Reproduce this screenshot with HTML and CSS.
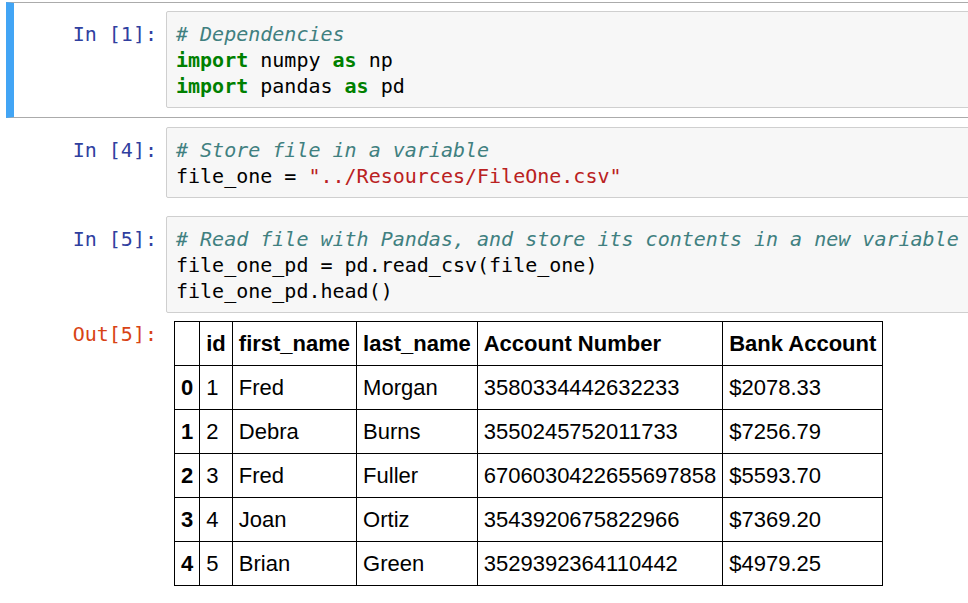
FILE: index.html
```html
<!DOCTYPE html>
<html>
<head>
<meta charset="utf-8">
<link rel="stylesheet" href="styles.css">
</head>
<body>
<div class="notebook">
  <div class="cell selected">
    <div class="row">
      <div class="prompt in">In&nbsp;[1]:</div>
      <div class="input-area"><pre><span class="c"># Dependencies</span>
<span class="k">import</span> numpy <span class="k">as</span> np
<span class="k">import</span> pandas <span class="k">as</span> pd</pre></div>
    </div>
  </div>
  <div class="cell">
    <div class="row">
      <div class="prompt in">In&nbsp;[4]:</div>
      <div class="input-area"><pre><span class="c"># Store file in a variable</span>
file_one = <span class="s">"../Resources/FileOne.csv"</span></pre></div>
    </div>
  </div>
  <div class="cell">
    <div class="row">
      <div class="prompt in">In&nbsp;[5]:</div>
      <div class="input-area"><pre><span class="c"># Read file with Pandas, and store its contents in a new variable</span>
file_one_pd = pd.read_csv(file_one)
file_one_pd.head()</pre></div>
    </div>
    <div class="row output">
      <div class="prompt out">Out[5]:</div>
      <div class="output-sub">
        <table class="df">
          <thead>
            <tr><th></th><th>id</th><th>first_name</th><th>last_name</th><th>Account Number</th><th>Bank Account</th></tr>
          </thead>
          <tbody>
            <tr><th>0</th><td>1</td><td>Fred</td><td>Morgan</td><td>3580334442632233</td><td>$2078.33</td></tr>
            <tr><th>1</th><td>2</td><td>Debra</td><td>Burns</td><td>3550245752011733</td><td>$7256.79</td></tr>
            <tr><th>2</th><td>3</td><td>Fred</td><td>Fuller</td><td>6706030422655697858</td><td>$5593.70</td></tr>
            <tr><th>3</th><td>4</td><td>Joan</td><td>Ortiz</td><td>3543920675822966</td><td>$7369.20</td></tr>
            <tr><th>4</th><td>5</td><td>Brian</td><td>Green</td><td>3529392364110442</td><td>$4979.25</td></tr>
          </tbody>
        </table>
      </div>
    </div>
  </div>
</div>
</body>
</html>
```

FILE: styles.css
```css
html, body {
  margin: 0;
  padding: 0;
  background: #fff;
  overflow: hidden;
}

body {
  padding-top: 2px;
  padding-left: 6px;
}

.notebook {
  width: 1020px;
}

.cell {
  border: 1px solid transparent;
  border-left: 8px solid transparent;
  padding: 8px;
}

.cell.selected {
  border-color: #ababab;
  border-left-color: #42a5f5;
  padding-bottom: 9px;
}

.row {
  display: flex;
  align-items: flex-start;
}

.prompt {
  width: 135px;
  flex: none;
  padding-right: 9px;
  text-align: right;
  font-family: "DejaVu Sans Mono", monospace;
  font-size: 20px;
  line-height: 26px;
  white-space: nowrap;
}

.prompt.in {
  color: #303f9f;
  padding-top: 10px;
}

.prompt.out {
  color: #d84315;
  padding-top: 0;
}

.input-area {
  flex: 1;
  background: #f7f7f7;
  border: 1px solid #cfcfcf;
  border-radius: 2px;
  padding: 9px 9px 8px 9px;
}

pre {
  margin: 0;
  font-family: "DejaVu Sans Mono", monospace;
  font-size: 20px;
  line-height: 26px;
  color: #000;
}

.c {
  color: #408080;
  font-style: italic;
}

.k {
  color: #008000;
  font-weight: bold;
}

.s {
  color: #ba2121;
}

.output {
  margin-top: 8px;
}

.output-sub {
  padding-left: 8px;
}

.df {
  border-collapse: collapse;
  font-family: "Liberation Sans", Arial, sans-serif;
  font-size: 22px;
  color: #000;
}

.df th, .df td {
  border: 1px solid #000;
  padding: 9px 6px;
  line-height: 25px;
  text-align: left;
  white-space: nowrap;
}

.df th {
  font-weight: bold;
}

.df td {
  font-weight: normal;
}
```
